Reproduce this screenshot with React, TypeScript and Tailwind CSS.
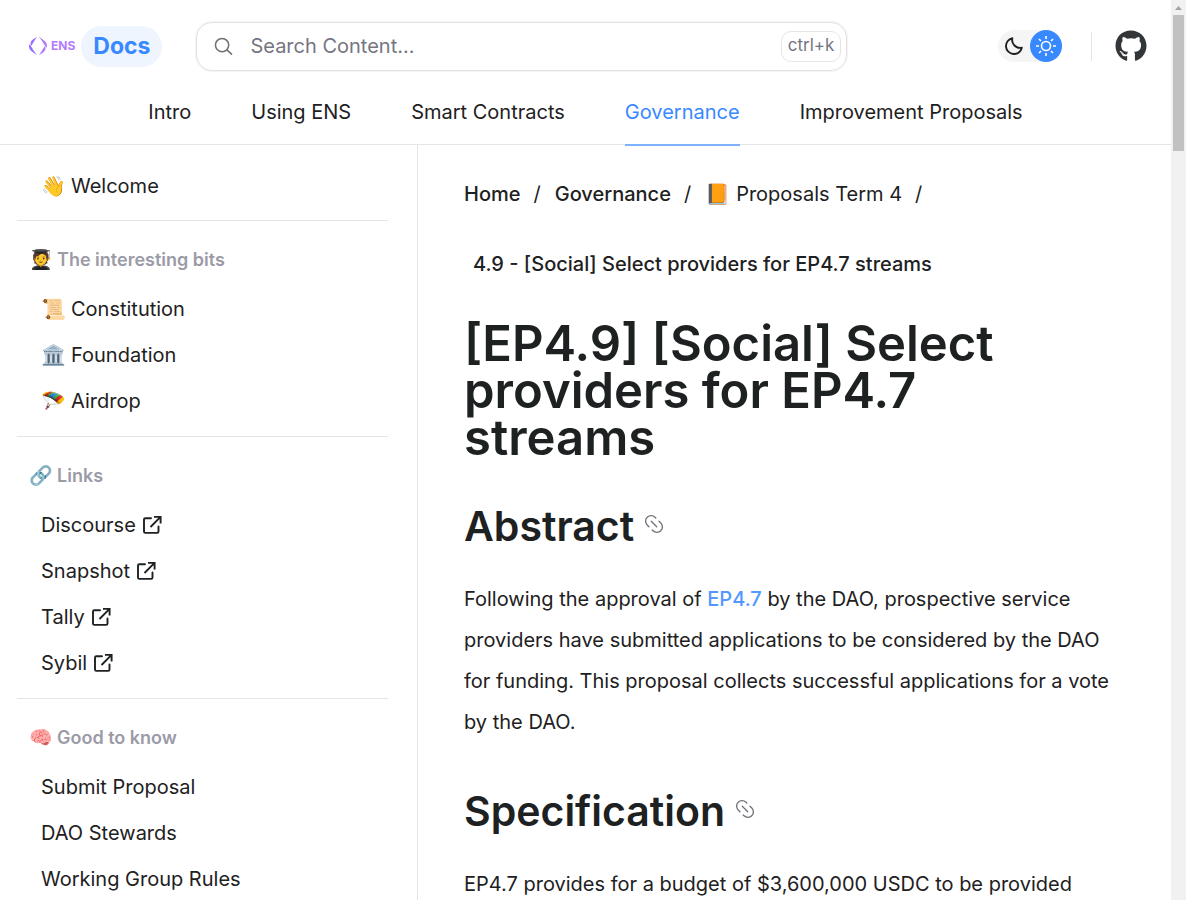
import React from "react";
import { FaGithub } from "react-icons/fa";

const NAV = ["Intro", "Using ENS", "Smart Contracts", "Governance", "Improvement Proposals"];

type Item = { label: string; emoji?: string; external?: boolean };

const SECTIONS: { title: string; emoji: string; items: Item[] }[] = [
  {
    title: "The interesting bits",
    emoji: "🧑‍🎓",
    items: [
      { label: "Constitution", emoji: "📜" },
      { label: "Foundation", emoji: "🏛️" },
      { label: "Airdrop", emoji: "🪂" },
    ],
  },
  {
    title: "Links",
    emoji: "🔗",
    items: [
      { label: "Discourse", external: true },
      { label: "Snapshot", external: true },
      { label: "Tally", external: true },
      { label: "Sybil", external: true },
    ],
  },
  {
    title: "Good to know",
    emoji: "🧠",
    items: [{ label: "Submit Proposal" }, { label: "DAO Stewards" }, { label: "Working Group Rules" }],
  },
];

function EnsLogo() {
  return (
    <span className="flex items-center gap-1">
      <svg viewBox="0 0 18 20" className="h-5 w-[18px] shrink-0" aria-hidden="true">
        <defs>
          <linearGradient id="ens" x1="0" y1="0" x2="18" y2="0" gradientUnits="userSpaceOnUse">
            <stop offset="0" stopColor="#8f6bff" />
            <stop offset="1" stopColor="#b57bff" />
          </linearGradient>
        </defs>
        <g fill="url(#ens)">
          <path d="M8 0.800 L2.300 9.800 C1.300 8.400 1.300 6.700 2.200 5.200 C3.200 3.800 5.600 2.400 8 0.800Z" />
          <path d="M0 10 C0 12.300 1 14 2.600 15.300 L8 19.200 C5.600 15.800 3.200 12.500 1.300 9 C0.700 7.600 0.100 8.400 0 10Z" />
          <path d="M10 19.200 L15.700 10.200 C16.700 11.600 16.700 13.300 15.800 14.800 C14.800 16.200 12.400 17.600 10 19.200Z" />
          <path d="M18 10 C18 7.700 17 6 15.400 4.700 L10 0.800 C12.400 4.200 14.800 7.500 16.700 11 C17.300 12.400 17.900 11.600 18 10Z" />
        </g>
      </svg>
      <span className="text-xs font-bold text-[#b57bff]">ENS</span>
    </span>
  );
}

function ExternalIcon() {
  return (
    <svg viewBox="0 0 20 20" className="size-5 shrink-0" fill="none" stroke="currentColor" strokeWidth="1.900" strokeLinecap="round" aria-hidden="true">
      <path strokeLinejoin="round" d="M9 3.300H3.300C2.500 3.300 2 3.800 2 4.600V16.600C2 17.400 2.500 17.900 3.300 17.900H15.200C16 17.900 16.500 17.400 16.500 16.600V11.500" />
      <path strokeLinecap="butt" d="M12 1.900H18.600V8.500M18.300 2.200L8.500 12" />
    </svg>
  );
}

function AnchorIcon() {
  return (
    <svg viewBox="0 0 20 20" className="mb-1 size-5 shrink-0 text-[#6f7078]" fill="none" stroke="currentColor" strokeWidth="1.300" strokeLinecap="round" aria-hidden="true">
      <path d="M7.300 7.300l5.400 5.400" />
      <path d="M11.800 4L11 3.200A5.400 5.400 0 0 0 3.200 11L5 12.700" />
      <path d="M8.200 16L9 16.800A5.400 5.400 0 0 0 16.800 9L15 7.300" />
    </svg>
  );
}

function Sidebar() {
  return (
    <nav aria-label="Governance" className="w-[418px] shrink-0 border-r border-[#e5e5e6] pr-[29px] pl-[17px] pt-[18px]">
      <ul className="border-b border-[#e5e5e6] pb-[11px]">
        <SidebarLink item={{ label: "Welcome", emoji: "👋" }} />
      </ul>
      {SECTIONS.map((s) => (
        <section key={s.title} className="border-b border-[#e5e5e6] pt-[25px] pb-3">
          <h2 className="mb-3 flex h-7 items-center gap-1 pl-3 text-lg font-semibold text-[#9b9ba7]">
            <span className="w-6 text-center text-[19px]">{s.emoji}</span>
            <span>{s.title}</span>
          </h2>
          <ul>
            {s.items.map((i) => (
              <SidebarLink key={i.label} item={i} />
            ))}
          </ul>
        </section>
      ))}
    </nav>
  );
}

function SidebarLink({ item }: { item: Item }) {
  return (
    <li>
      <a href="#" className="flex h-[46px] items-center gap-[6px] pl-6 text-xl">
        {item.emoji && <span className="w-6 text-center">{item.emoji}</span>}
        <span>{item.label}</span>
        {item.external && <ExternalIcon />}
      </a>
    </li>
  );
}

function Header() {
  return (
    <header className="border-b border-[#e5e5e6]">
      <div className="flex h-[92px] items-center pr-6 pl-[29px]">
        <a href="#" className="flex items-center gap-[6px]">
          <EnsLogo />
          <span className="flex h-[41px] items-center rounded-full bg-[#eef5ff] px-3 text-[23px] font-bold text-[#3889ff]">Docs</span>
        </a>
        <label className="ml-[34px] flex h-[49px] w-[651px] items-center rounded-2xl border border-[#e2e2e3] pr-[5px] pl-[17px] shadow-[0_0_1px_1px_#f3f3f4]">
          <svg viewBox="0 0 20 20" className="mr-[17px] size-[19px] shrink-0 text-[#6f7078]" fill="none" stroke="currentColor" strokeWidth="1.600" strokeLinecap="round" aria-hidden="true">
            <path d="M8.500 15.500a7 7 0 1 0 0-14 7 7 0 0 0 0 14ZM13.500 13.500l5 4.500" />
          </svg>
          <input aria-label="Search content" placeholder="Search Content..." className="min-w-0 grow bg-transparent text-xl outline-none placeholder:text-[#757581]" />
          <kbd className="flex h-[31px] items-center rounded-[10px] border border-[#e5e5e6] px-[6px] font-['Inter',sans-serif] text-[17px] text-[#757581]">ctrl+k</kbd>
        </label>
        <div className="ml-auto flex items-center">
          <button type="button" aria-label="Toggle theme" className="flex h-8 w-16 items-center justify-between rounded-full bg-[#f5f5f5]">
            <svg viewBox="0 0 20 20" className="ml-[6px] size-5" fill="none" stroke="#1e2122" strokeWidth="1.900" strokeLinejoin="round" aria-hidden="true">
              <path d="M8.300 2.200A8 8 0 1 0 17.800 11.700A8 8 0 0 1 8.300 2.200Z" />
            </svg>
            <span className="flex size-8 items-center justify-center rounded-full bg-[#3889ff]">
              <svg viewBox="0 0 20 20" className="size-5" fill="none" stroke="#fff" strokeWidth="1.600" aria-hidden="true">
                <circle cx="10" cy="10" r="4.500" />
                <path d="M10 0v3M10 17v3M0 10h3M17 10h3M3 3l2 2M15 15l2 2M3 17l2-2M15 5l2-2" />
              </svg>
            </span>
          </button>
          <span className="mr-[23px] ml-[29px] h-[29px] w-px bg-[#e5e5e6]" />
          <a href="#" aria-label="GitHub">
            <FaGithub className="size-8 text-[#333639]" />
          </a>
        </div>
      </div>
      <nav aria-label="Main" className="flex h-[52px] justify-center gap-[60px] text-xl">
        {NAV.map((n) => (
          <a key={n} href="#" className={n === "Governance" ? "-mb-[2px] border-b-2 border-[#7fb2fc] pt-[6px] text-[#3889ff]" : "pt-[6px]"}>
            {n}
          </a>
        ))}
      </nav>
    </header>
  );
}

function SectionTitle({ children }: { children: React.ReactNode }) {
  return (
    <h2 className="flex items-center gap-[10px] text-[41px] leading-[52px] font-semibold">
      {children}
      <AnchorIcon />
    </h2>
  );
}

function Article() {
  return (
    <main className="min-w-0 grow pt-[29px] pr-[50px] pl-[46px] text-xl">
      <nav aria-label="Breadcrumb" className="font-medium">
        <ol className="flex h-10 items-center">
          <li><a href="#">Home</a></li>
          <li className="mr-[14px] ml-[13px] font-normal">/</li>
          <li><a href="#">Governance</a></li>
          <li className="mr-[14px] ml-[13px] font-normal">/</li>
          <li className="flex gap-[6px] font-normal"><span>📙</span>Proposals Term 4</li>
          <li className="mr-[14px] ml-[13px] font-normal">/</li>
        </ol>
        <p className="mt-[30px] pl-[9px] leading-10">4.9 - [Social] Select providers for EP4.7 streams</p>
      </nav>
      <h1 className="mt-9 max-w-[600px] text-[49px] leading-[47px] font-semibold">[EP4.9] [Social] Select providers for EP4.7 streams</h1>
      <div className="mt-[39px]">
        <SectionTitle>Abstract</SectionTitle>
      </div>
      <p className="mt-[27px] leading-[41px]">
        Following the approval of <a href="#" className="font-medium text-[#5298ff]">EP4.7</a> by the DAO, prospective service providers have submitted applications to be considered by the DAO for funding. This proposal collects successful applications for a vote by the DAO.
      </p>
      <div className="mt-[42px]">
        <SectionTitle>Specification</SectionTitle>
      </div>
      <p className="mt-[27px] leading-[41px]">EP4.7 provides for a budget of $3,600,000 USDC to be provided</p>
    </main>
  );
}

export default function App() {
  return (
    <div className="flex h-screen overflow-hidden bg-white font-['Inter',sans-serif] text-[#1e2122]">
      <div className="min-w-0 grow">
        <Header />
        <div className="flex">
          <Sidebar />
          <Article />
        </div>
      </div>
      <div aria-hidden="true" className="flex w-[15px] shrink-0 flex-col items-center bg-[#f1f1f1]">
        <svg viewBox="0 0 15 15" className="h-[15px] w-[15px]" fill="#a3a3a3">
          <path d="M7.500 6L11 10H4Z" />
        </svg>
        <div className="h-[136px] w-[11px] bg-[#c1c1c1]" />
      </div>
    </div>
  );
}
